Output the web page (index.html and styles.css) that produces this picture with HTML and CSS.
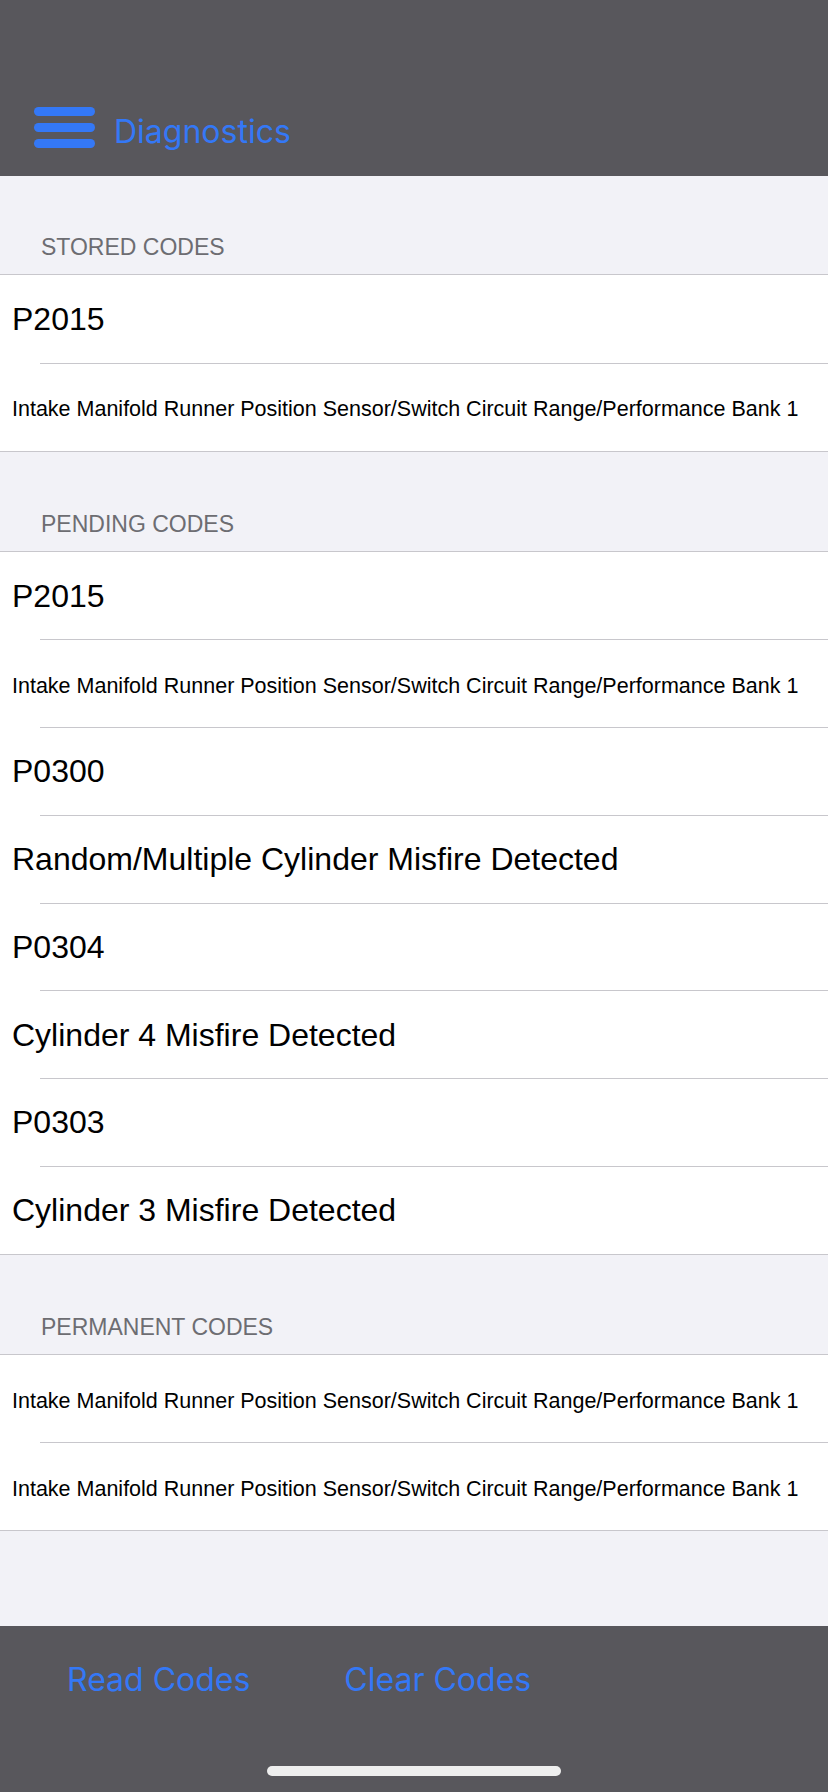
FILE: index.html
```html
<!DOCTYPE html>
<html lang="en">
<head>
    <meta charset="UTF-8">
    <meta name="viewport" content="width=device-width, initial-scale=1.0">
    <title>Diagnostics</title>
    <link rel="stylesheet" href="styles.css">
</head>
<body>
    <header class="nav-bar">
        <button class="menu-btn" aria-label="Menu">
            <span></span>
            <span></span>
            <span></span>
        </button>
        <h1 class="nav-title">Diagnostics</h1>
    </header>

    <main class="content">
        <section class="group">
            <div class="group-header">STORED CODES</div>
            <ul class="group-list">
                <li class="cell">P2015</li>
                <li class="cell small">Intake Manifold Runner Position Sensor/Switch Circuit Range/Performance Bank 1</li>
            </ul>
        </section>

        <section class="group">
            <div class="group-header">PENDING CODES</div>
            <ul class="group-list">
                <li class="cell">P2015</li>
                <li class="cell small">Intake Manifold Runner Position Sensor/Switch Circuit Range/Performance Bank 1</li>
                <li class="cell">P0300</li>
                <li class="cell">Random/Multiple Cylinder Misfire Detected</li>
                <li class="cell">P0304</li>
                <li class="cell">Cylinder 4 Misfire Detected</li>
                <li class="cell">P0303</li>
                <li class="cell">Cylinder 3 Misfire Detected</li>
            </ul>
        </section>

        <section class="group">
            <div class="group-header">PERMANENT CODES</div>
            <ul class="group-list">
                <li class="cell small">Intake Manifold Runner Position Sensor/Switch Circuit Range/Performance Bank 1</li>
                <li class="cell small">Intake Manifold Runner Position Sensor/Switch Circuit Range/Performance Bank 1</li>
            </ul>
        </section>
    </main>

    <footer class="toolbar">
        <div class="toolbar-items">
            <button class="bar-btn">Read Codes</button>
            <button class="bar-btn">Clear Codes</button>
        </div>
        <div class="home-indicator"></div>
    </footer>
</body>
</html>
```

FILE: styles.css
```css
html, body {
    margin: 0;
    padding: 0;
}
body {
    width: 828px;
    height: 1792px;
    display: flex;
    flex-direction: column;
    background-color: #f2f2f7;
    font-family: "Liberation Sans", Arial, sans-serif;
    overflow: hidden;
}
.nav-bar {
    height: 176px;
    box-sizing: border-box;
    background-color: #58575c;
    display: flex;
    align-items: flex-end;
    padding: 0 0 24px 34px;
    gap: 19px;
    flex-shrink: 0;
}
.menu-btn {
    width: 61px;
    padding: 0;
    margin: 0 0 4px 0;
    border: none;
    background: none;
    display: flex;
    flex-direction: column;
    gap: 7px;
}
.menu-btn span {
    display: block;
    height: 9px;
    border-radius: 5px;
    background-color: #3478f6;
}
.nav-title {
    margin: 0;
    font-family: Inter, "Noto Sans", sans-serif;
    font-weight: 400;
    font-size: 32px;
    line-height: 40px;
    color: #3478f6;
}
.content {
    flex: 1;
}
.group-header {
    height: 99px;
    box-sizing: border-box;
    display: flex;
    align-items: flex-end;
    padding: 0 0 13px 41px;
    font-size: 23px;
    line-height: 28px;
    color: #6d6d72;
    border-bottom: 1px solid #c8c7cc;
}
.group + .group .group-header {
    height: 100px;
}
.group-list {
    list-style: none;
    margin: 0;
    padding: 0;
    background-color: #fff;
    border-bottom: 1px solid #c8c7cc;
}
.cell {
    height: 87.75px;
    box-sizing: border-box;
    display: flex;
    align-items: center;
    padding: 2px 0 0 12px;
    font-size: 32px;
    color: #000;
    white-space: nowrap;
}
.cell + .cell {
    background-image: linear-gradient(#c8c7cc, #c8c7cc);
    background-size: calc(100% - 40px) 1px;
    background-position: right top;
    background-repeat: no-repeat;
}
.cell.small {
    font-size: 21.5px;
    padding-top: 6px;
}
.toolbar {
    height: 166px;
    box-sizing: border-box;
    background-color: #58575c;
    display: flex;
    flex-direction: column;
    align-items: center;
    padding: 34px 0 16px;
    flex-shrink: 0;
}
.toolbar-items {
    align-self: stretch;
    display: flex;
    gap: 94px;
    padding-left: 67px;
}
.bar-btn {
    padding: 0;
    border: none;
    background: none;
    font-family: Inter, "Noto Sans", sans-serif;
    font-size: 32px;
    line-height: 40px;
    color: #3478f6;
}
.home-indicator {
    margin-top: auto;
    width: 294px;
    height: 10px;
    border-radius: 5px;
    background-color: #eeeeee;
}
```
